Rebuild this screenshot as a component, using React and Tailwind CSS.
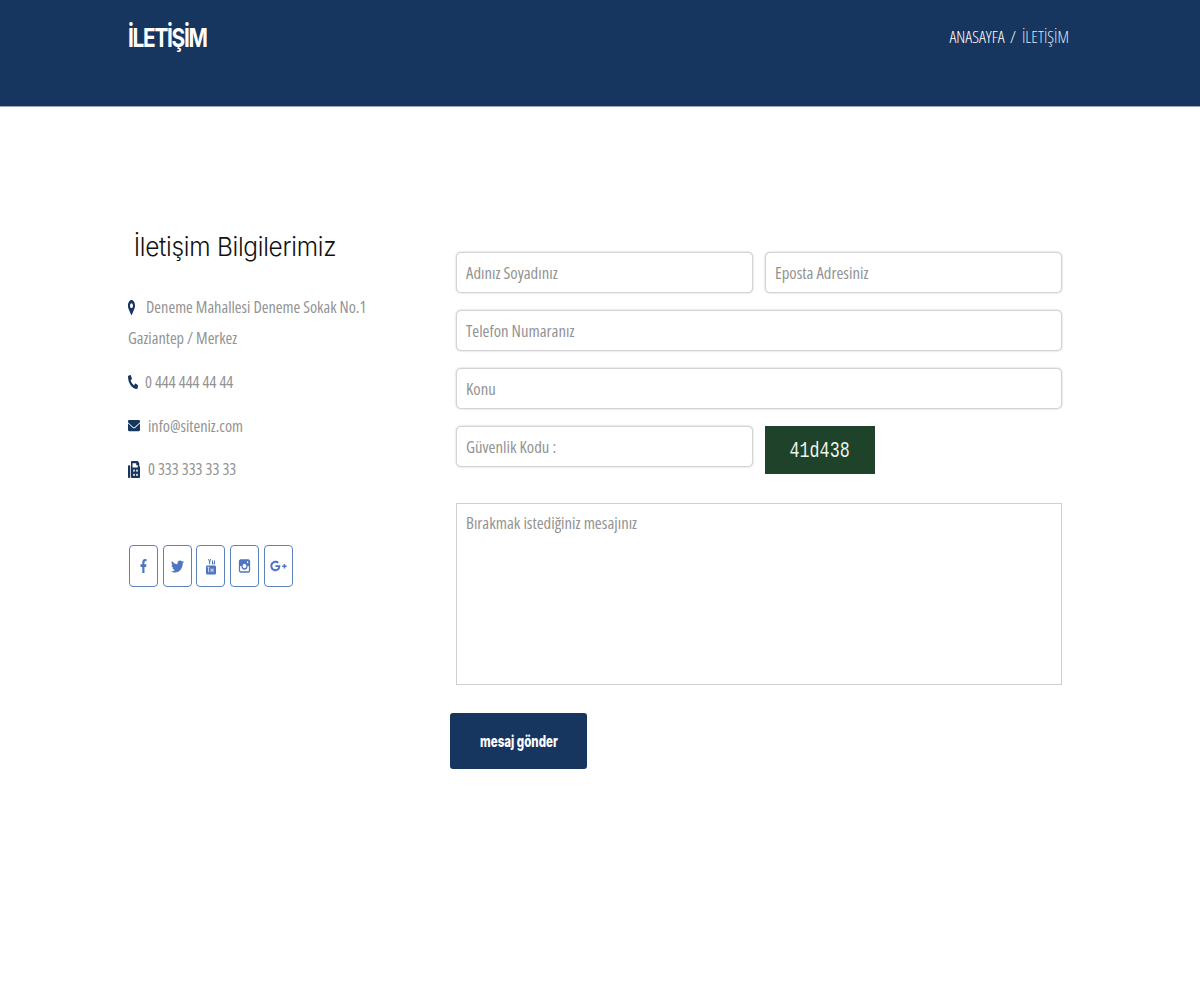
import React from 'react';
import { FaMapMarkerAlt, FaPhoneAlt, FaEnvelope, FaFax, FaFacebookF, FaTwitter, FaGooglePlusG } from 'react-icons/fa';
import { TiSocialInstagram } from 'react-icons/ti';

const inputClass = "h-[41px] rounded-[5px] border border-[#d4d4d4] bg-white px-[9px] font-['Open_Sans',sans-serif] text-[16.7px] [font-stretch:75%] text-[#777] placeholder:text-[#939393] shadow-[0_0_2px_rgba(0,0,0,0.25)] outline-none";

// old stacked youtube mark, not in the icon packs
const YoutubeStacked = ({ className }) => (
  <svg viewBox="0 0 10 16" className={className} fill="currentColor">
    <path d="M2 0.5h1l.6 2 .6-2h1l-1.1 3v2.2h-1V3.500z" />
    <path d="M6 2h1v3h1V2h1v3.700H6z" />
    <path d="M1.200 7h7.600a1.200 1.200 0 0 1 1.200 1.200v6.600a1.200 1.200 0 0 1-1.200 1.200H1.200a1.200 1.200 0 0 1-1.200-1.200V8.200A1.200 1.200 0 0 1 1.200 7z" />
    <path d="M1.500 8.800h2M2.500 8.800v5M5 10v3.800M7 10v3.800M5 11.500h2" stroke="#fff" strokeWidth="0.7" fill="none" />
  </svg>
);

const socials = [
  { Icon: FaFacebookF, cls: 'h-[14px] w-[7px]' },
  { Icon: FaTwitter, cls: 'h-[15px] w-[13px]' },
  { Icon: YoutubeStacked, cls: 'h-[17px] w-[10px]' },
  { Icon: TiSocialInstagram, cls: 'h-[18px] w-[15px]' },
  { Icon: FaGooglePlusG, cls: 'h-[14px] w-[17px]' },
];

const Contact = ({ icon: Icon, iconClass, gap, children }) => (
  <div className="flex items-center text-[#939393]">
    <Icon preserveAspectRatio="none" className={`${iconClass} shrink-0 text-[#16355f]`} />
    <span className={gap}>{children}</span>
  </div>
);

export default function App() {
  return (
    <div className="min-h-[1000px] bg-white font-['Open_Sans',sans-serif]">
      {/* Header */}
      <div className="h-[107px] border-b border-[#9aa5b5] bg-[#16355f]">
        <div className="mx-auto flex w-[944px] justify-between pt-[20px] text-white">
          <h1 className="origin-left scale-x-[0.8] font-['Inter',sans-serif] text-[26px] font-bold leading-[36px] tracking-[-1.6px]">İLETİŞİM</h1>
          <div className="pr-[3px] text-[17px] font-[350] leading-[34px] [font-stretch:75%]">
            ANASAYFA <span className="mx-[2px]">/</span> <span className="ml-[1px] text-[#dfe5ee]">İLETİŞİM</span>
          </div>
        </div>
      </div>

      <div className="mx-auto flex w-[944px]">
        {/* Sol kolon */}
        <div className="w-[328px] pt-[122px]">
          <h2 className="origin-left scale-x-[0.94] pl-[6px] font-['Inter',sans-serif] text-[26px] font-[350] leading-[36px] tracking-[-0.3px] text-[#111]">İletişim Bilgilerimiz</h2>
          <div className="mt-[26px] text-[16.3px] leading-[32px] [font-stretch:75%] text-[#939393]">
            <div className="flex items-center">
              <FaMapMarkerAlt preserveAspectRatio="none" className="mr-[11px] h-[15px] w-[7px] text-[#16355f]" />
              Deneme Mahallesi Deneme Sokak No.1
            </div>
            <div className="-mt-px">Gaziantep / Merkez</div>
          </div>
          <div className="mt-[12px] flex flex-col gap-[11.5px] text-[16.3px] leading-[32px] [font-stretch:75%]">
            <Contact icon={FaPhoneAlt} iconClass="h-[14px] w-[10px]" gap="ml-[7px]">0 444 444 44 44</Contact>
            <Contact icon={FaEnvelope} iconClass="h-[15px] w-[12px]" gap="ml-[8px]">info@siteniz.com</Contact>
            <Contact icon={FaFax} iconClass="h-[17px] w-[12px]" gap="ml-[8px]">0 333 333 33 33</Contact>
          </div>
          <div className="mt-[60px] flex gap-[4.7px] pl-[1px]">
            {socials.map(({ Icon, cls }, i) => (
              <div key={i} className="flex h-[42px] w-[29px] items-center justify-center rounded-[4px] border border-[#5b82bb] text-[#4f74c4]">
                <Icon preserveAspectRatio="none" className={cls} />
              </div>
            ))}
          </div>
        </div>

        {/* Form */}
        <div className="flex w-[606px] flex-col pt-[145px]">
          <div className="grid grid-cols-2 gap-x-[12px] gap-y-[17px]">
            <input className={inputClass} placeholder="Adınız Soyadınız" />
            <input className={inputClass} placeholder="Eposta Adresiniz" />
            <input className={`${inputClass} col-span-2`} placeholder="Telefon Numaranız" />
            <input className={`${inputClass} col-span-2`} placeholder="Konu" />
            <input className={inputClass} placeholder="Güvenlik Kodu :" />
            <div className="flex h-[48px] w-[110px] items-center justify-center bg-[#1f422a] pt-[3px] text-[#eef4ea]">
              <span className="inline-block scale-x-[0.76] font-['Liberation_Mono',monospace] text-[22px]">41d438</span>
            </div>
          </div>
          <textarea
            className="mt-[29px] h-[182px] resize-none border border-[#cfcfcf] bg-white px-[9px] py-[6px] font-['Open_Sans',sans-serif] text-[16.7px] [font-stretch:75%] placeholder:text-[#939393] outline-none"
            placeholder="Bırakmak istediğiniz mesajınız"
          />
          <button className="-ml-[6px] mt-[28px] h-[56px] w-[137px] rounded-[3px] bg-[#16355f] text-white">
            <span className="inline-block scale-x-[0.72] font-['Inter',sans-serif] text-[16px] font-extrabold">mesaj gönder</span>
          </button>
        </div>
      </div>
    </div>
  );
}
